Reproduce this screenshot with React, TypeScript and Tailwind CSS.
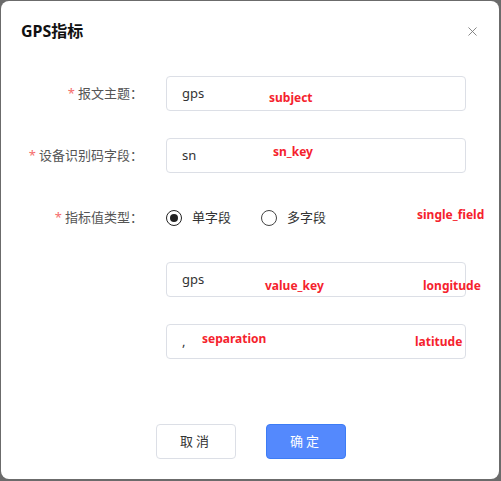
import { X } from "lucide-react";

function Field({ label, value }: { label?: string; value: string }) {
  return (
    <div className="flex items-center">
      <div className="w-[145px] pr-[3px] text-right text-[13px] text-[#555]">
        {label && (
          <>
            <span className="mr-[3px] text-[#f56c6c]">*</span>
            {label}：
          </>
        )}
      </div>
      <div className="ml-5 flex h-[35px] w-[300px] items-center rounded border border-[#dcdfe6] px-[15px] text-[13px] text-[#333]">
        {value}
      </div>
    </div>
  );
}

function Radio({ checked, label }: { checked?: boolean; label: string }) {
  return (
    <label className="flex items-center gap-[10px] text-[13px] text-[#333]">
      <span
        className={
          checked
            ? "flex h-[16px] w-[16px] items-center justify-center rounded-full border-[1.5px] border-[#222]"
            : "h-[16px] w-[16px] rounded-full border-[1.5px] border-[#444]"
        }
      >
        {checked && <span className="h-[8px] w-[8px] rounded-full bg-[#222]" />}
      </span>
      {label}
    </label>
  );
}

// red notes drawn over the form
const notes = [
  { text: "subject", cls: "left-[269px] top-[91px]" },
  { text: "sn_key", cls: "left-[273px] top-[145px]" },
  { text: "single_field", cls: "left-[417px] top-[208px]" },
  { text: "value_key", cls: "left-[265px] top-[279px]" },
  { text: "longitude", cls: "left-[423px] top-[279px]" },
  { text: "separation", cls: "left-[202px] top-[332px]" },
  { text: "latitude", cls: "left-[415px] top-[335px]" },
];

export default function App() {
  return (
    <div
      className="relative h-[481px] w-[501px] bg-[#6b6b6b] pl-[1px] pt-[1px]"
      style={{ fontFamily: '"Noto Sans", "Noto Sans CJK SC", sans-serif' }}
    >
      <div className="relative h-[478px] w-[498px] rounded-lg bg-white">
        <div className="flex items-center justify-between pl-5 pr-[19px] pt-5">
          <h2 className="text-[16px] leading-5 font-bold text-[#111]">GPS指标</h2>
          <X className="h-[15px] w-[15px] text-[#777]" strokeWidth={1.4} />
        </div>

        <div className="mt-[35px] flex flex-col gap-[27px]">
          <Field label="报文主题" value="gps" />
          <Field label="设备识别码字段" value="sn" />
          <div className="flex h-[35px] items-center">
            <div className="w-[145px] pr-[3px] text-right text-[13px] text-[#555]">
              <span className="mr-[3px] text-[#f56c6c]">*</span>
              指标值类型：
            </div>
            <div className="ml-5 flex items-center gap-[30px]">
              <Radio checked label="单字段" />
              <Radio label="多字段" />
            </div>
          </div>
          <Field value="gps" />
          <Field value="," />
        </div>

        <div className="mt-[65px] flex justify-center gap-[30px] pl-[2px]">
          <button className="h-[35px] w-[80px] rounded border border-[#dcdfe6] bg-white text-[13px] tracking-[3px] text-[#333]">
            取消
          </button>
          <button className="h-[35px] w-[80px] rounded border border-[#3d7cf5] bg-[#5489fd] text-[13px] tracking-[3px] text-white">
            确定
          </button>
        </div>
      </div>

      {notes.map((n) => (
        <span
          key={n.text}
          className={`absolute text-[12px] leading-[14px] font-bold text-[#f5222d] ${n.cls}`}
        >
          {n.text}
        </span>
      ))}
    </div>
  );
}
